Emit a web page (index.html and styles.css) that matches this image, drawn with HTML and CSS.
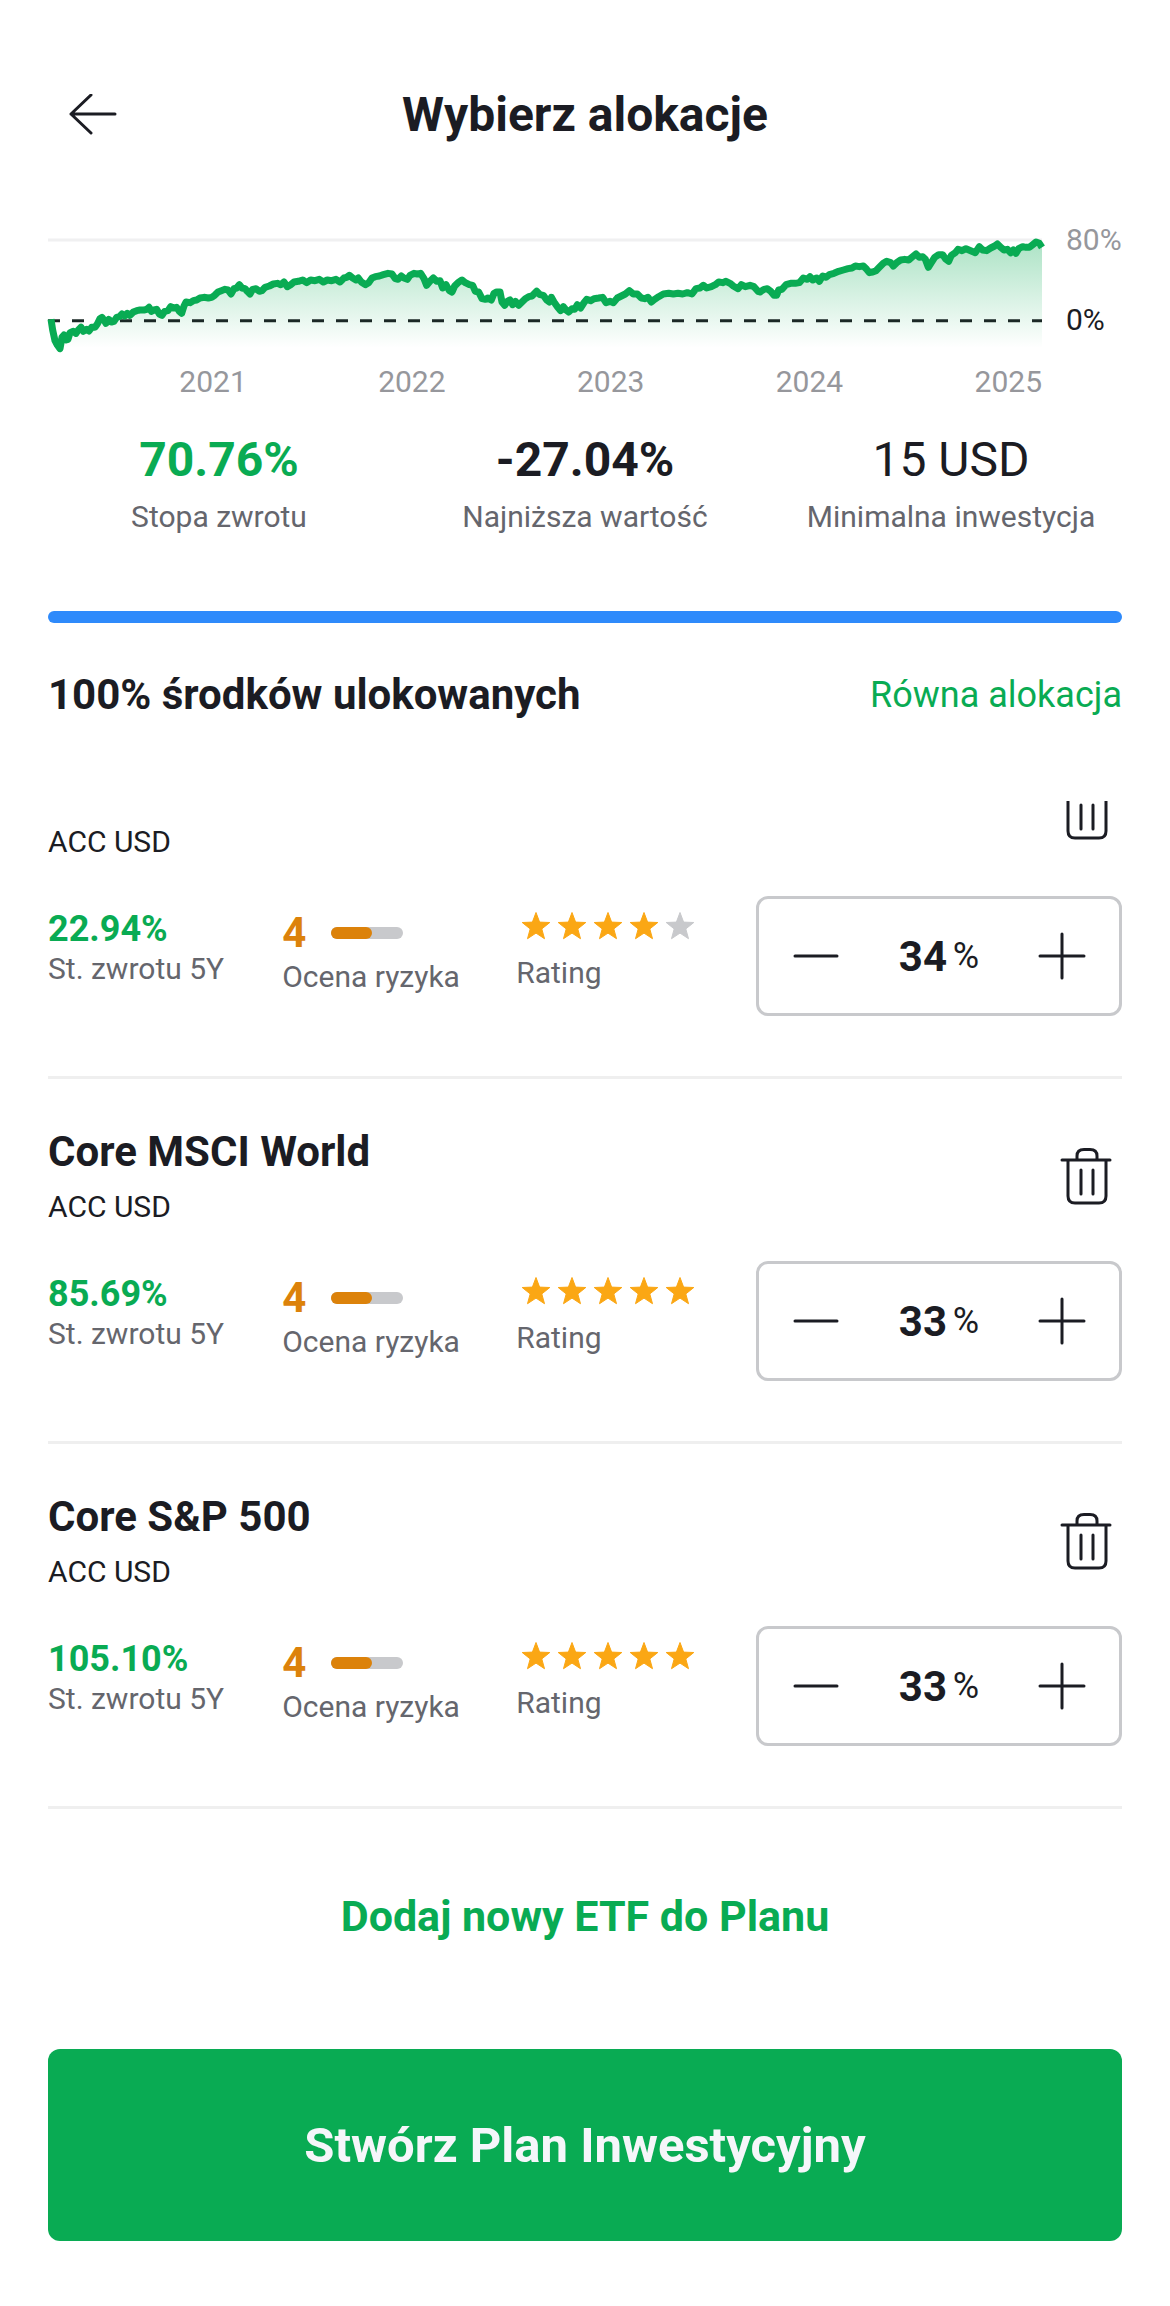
FILE: index.html
```
<!DOCTYPE html>
<html lang="pl">
<head>
  <meta charset="UTF-8">
  <meta name="viewport" content="width=device-width, initial-scale=1.0">
  <title>Wybierz alokacje</title>
  <link rel="stylesheet" href="styles.css">
</head>
<body>
  <!-- shared icons -->
  <svg class="sprite" aria-hidden="true">
    <symbol id="trash" viewBox="0 0 60 60">
      <path d="M6 12H54M12 12V48Q12 55 19 55H43Q50 55 50 48V12M21 12V8Q21 1.500 28 1.500H34Q41 1.500 41 8V12M25 22V46M37 22V46"/>
    </symbol>
    <symbol id="minus" viewBox="0 0 48 48"><path d="M3 24H45"/></symbol>
    <symbol id="plus" viewBox="0 0 48 48"><path d="M2 24H46M24 2V46"/></symbol>
    <symbol id="star" viewBox="0 0 36 36">
      <path d="M20 3.500L23.600 13.100L33.800 13.500L25.800 19.900L28.500 29.700L20 24.100L11.500 29.700L14.200 19.900L6.200 13.500L16.400 13.100Z"/>
    </symbol>
  </svg>

  <div class="screen">
    <header class="header">
      <button class="icon-button back" aria-label="Wstecz">
        <svg class="back-icon" viewBox="0 0 48 42"><path d="M46 20H2M22 1L2 20L22 39"/></svg>
      </button>
      <h1>Wybierz alokacje</h1>
    </header>

    <section class="chart">
      <svg class="plot" viewBox="0 0 2982 390" preserveAspectRatio="none">
        <defs>
          <linearGradient id="fade" gradientUnits="userSpaceOnUse" x1="0" y1="60" x2="0" y2="384">
            <stop offset="0" stop-color="#09ab53" stop-opacity="0.34"/>
            <stop offset="1" stop-color="#09ab53" stop-opacity="0"/>
          </linearGradient>
        </defs>
        <path class="grid-line" d="M0 60H2982"/>
        <path id="area" fill="url(#fade)"/>
        <path class="zero-line" d="M0 302H2982"/>
        <path id="line" class="line"/>
      </svg>
      <div class="y-axis">
        <span>80%</span>
        <span class="zero">0%</span>
      </div>
      <div class="x-axis">
        <span>2021</span>
        <span>2022</span>
        <span>2023</span>
        <span>2024</span>
        <span>2025</span>
      </div>
    </section>

    <section class="stats">
      <div class="stat">
        <strong class="green">70.76%</strong>
        <span>Stopa zwrotu</span>
      </div>
      <div class="stat">
        <strong>-27.04%</strong>
        <span>Najniższa wartość</span>
      </div>
      <div class="stat">
        <strong class="light">15 USD</strong>
        <span>Minimalna inwestycja</span>
      </div>
    </section>

    <div class="progress"><div class="progress-fill" style="width: 100%"></div></div>

    <div class="summary">
      <h2>100% środków ulokowanych</h2>
      <a href="#">Równa alokacja</a>
    </div>

    <!-- scrolled to the last fund -->
    <main class="fund-list">
      <article class="fund">
        <div class="fund-header">
          <div>
            <h3>Core MSCI EM IMI</h3>
            <p>ACC USD</p>
          </div>
          <button class="icon-button" aria-label="Usuń"><svg class="trash-icon"><use href="#trash"/></svg></button>
        </div>
        <div class="fund-body">
          <div class="metric">
            <div class="return">22.94%</div>
            <span>St. zwrotu 5Y</span>
          </div>
          <div class="metric">
            <div class="risk">4<div class="risk-bar"><div class="risk-fill" style="width: 57%"></div></div></div>
            <span>Ocena ryzyka</span>
          </div>
          <div class="metric">
            <div class="stars">
              <svg><use href="#star"/></svg><svg><use href="#star"/></svg><svg><use href="#star"/></svg><svg><use href="#star"/></svg><svg class="empty"><use href="#star"/></svg>
            </div>
            <span>Rating</span>
          </div>
          <div class="stepper">
            <button class="icon-button" aria-label="Mniej"><svg class="step-icon"><use href="#minus"/></svg></button>
            <label class="amount"><input type="text" inputmode="numeric" value="34">%</label>
            <button class="icon-button" aria-label="Więcej"><svg class="step-icon"><use href="#plus"/></svg></button>
          </div>
        </div>
      </article>

      <article class="fund">
        <div class="fund-header">
          <div>
            <h3>Core MSCI World</h3>
            <p>ACC USD</p>
          </div>
          <button class="icon-button" aria-label="Usuń"><svg class="trash-icon"><use href="#trash"/></svg></button>
        </div>
        <div class="fund-body">
          <div class="metric">
            <div class="return">85.69%</div>
            <span>St. zwrotu 5Y</span>
          </div>
          <div class="metric">
            <div class="risk">4<div class="risk-bar"><div class="risk-fill" style="width: 57%"></div></div></div>
            <span>Ocena ryzyka</span>
          </div>
          <div class="metric">
            <div class="stars">
              <svg><use href="#star"/></svg><svg><use href="#star"/></svg><svg><use href="#star"/></svg><svg><use href="#star"/></svg><svg><use href="#star"/></svg>
            </div>
            <span>Rating</span>
          </div>
          <div class="stepper">
            <button class="icon-button" aria-label="Mniej"><svg class="step-icon"><use href="#minus"/></svg></button>
            <label class="amount"><input type="text" inputmode="numeric" value="33">%</label>
            <button class="icon-button" aria-label="Więcej"><svg class="step-icon"><use href="#plus"/></svg></button>
          </div>
        </div>
      </article>

      <article class="fund">
        <div class="fund-header">
          <div>
            <h3>Core S&amp;P 500</h3>
            <p>ACC USD</p>
          </div>
          <button class="icon-button" aria-label="Usuń"><svg class="trash-icon"><use href="#trash"/></svg></button>
        </div>
        <div class="fund-body">
          <div class="metric">
            <div class="return">105.10%</div>
            <span>St. zwrotu 5Y</span>
          </div>
          <div class="metric">
            <div class="risk">4<div class="risk-bar"><div class="risk-fill" style="width: 57%"></div></div></div>
            <span>Ocena ryzyka</span>
          </div>
          <div class="metric">
            <div class="stars">
              <svg><use href="#star"/></svg><svg><use href="#star"/></svg><svg><use href="#star"/></svg><svg><use href="#star"/></svg><svg><use href="#star"/></svg>
            </div>
            <span>Rating</span>
          </div>
          <div class="stepper">
            <button class="icon-button" aria-label="Mniej"><svg class="step-icon"><use href="#minus"/></svg></button>
            <label class="amount"><input type="text" inputmode="numeric" value="33">%</label>
            <button class="icon-button" aria-label="Więcej"><svg class="step-icon"><use href="#plus"/></svg></button>
          </div>
        </div>
      </article>
    </main>

    <footer class="footer">
      <button class="add-button">Dodaj nowy ETF do Planu</button>
      <button class="create-button">Stwórz Plan Inwestycyjny</button>
    </footer>
  </div>

  <script>
    // x,y pairs of the portfolio history in plot units
    const points = `9,298 14,330 21,362 28,375 36,386 42,352 48,345 54,360 60,358 66,338 76,334 84,340 91,330 99,322
      106,334 116,328 123,333 131,322 141,322 148,312 156,296 162,292 168,300 174,310 182,298 190,306 198,304 206,292
      214,290 222,282 230,288 238,280 246,286 256,276 266,272 276,270 288,270 296,268 303,262 310,274 318,270 326,268
      334,282 342,286 350,274 360,272 368,260 376,264 386,262 394,274 401,280 408,258 414,246 426,248 436,242 446,240
      456,234 468,232 481,234 491,232 500,226 510,216 520,212 531,208 540,210 549,222 558,206 566,204 574,194 582,204
      591,206 598,214 606,222 614,208 624,206 634,214 642,212 651,202 664,198 676,192 688,190 698,194 708,186 718,200
      728,194 738,186 751,184 764,180 776,188 788,180 801,182 814,178 826,186 838,180 851,182 864,178 876,186 888,174
      896,172 904,166 914,174 924,180 931,174 940,186 952,194 962,188 972,174 982,170 994,168 1006,164 1020,160
      1032,162 1042,176 1050,178 1060,168 1068,174 1078,178 1086,166 1098,160 1108,162 1118,160 1128,176 1136,196
      1146,184 1156,174 1166,184 1176,182 1184,204 1194,194 1204,212 1212,216 1220,198 1230,188 1242,180 1252,188
      1264,194 1274,196 1282,214 1292,216 1302,236 1312,238 1320,234 1330,240 1338,220 1346,216 1356,216 1362,246
      1370,256 1378,244 1386,240 1394,254 1402,244 1412,256 1422,246 1432,236 1442,230 1452,228 1466,214 1476,224
      1486,226 1496,240 1504,246 1510,232 1518,246 1528,260 1538,272 1546,260 1554,270 1562,276 1572,266 1580,268
      1588,254 1598,264 1608,248 1616,238 1628,242 1638,236 1652,234 1664,232 1674,248 1686,244 1696,248 1708,234
      1720,228 1732,222 1744,212 1756,222 1768,222 1780,234 1790,236 1800,232 1810,246 1820,238 1832,230 1846,222
      1862,220 1876,222 1890,220 1904,222 1918,218 1932,222 1944,206 1956,204 1966,196 1976,204 1990,200 2002,194
      2012,186 2024,188 2034,184 2046,190 2056,198 2070,206 2080,194 2092,200 2106,196 2118,200 2130,214 2136,216
      2148,208 2158,206 2168,214 2178,226 2186,226 2192,210 2202,208 2214,194 2228,190 2242,190 2254,188 2266,174
      2278,178 2286,170 2294,180 2306,174 2314,184 2324,168 2334,172 2344,164 2358,160 2372,154 2386,150 2400,146
      2412,144 2422,138 2434,140 2446,138 2456,148 2464,158 2474,156 2484,152 2494,142 2506,130 2516,124 2528,128
      2536,138 2546,128 2558,120 2570,118 2582,120 2594,110 2604,102 2614,112 2624,110 2632,118 2641,142 2650,128
      2660,112 2672,104 2684,104 2692,116 2702,124 2710,106 2722,98 2730,88 2742,92 2754,86 2768,92 2782,98 2794,80
      2804,90 2816,92 2828,84 2840,78 2848,72 2858,82 2868,90 2878,88 2888,98 2896,90 2904,100 2912,86 2924,80
      2934,82 2944,82 2954,74 2964,66 2974,70 2982,82`.trim().split(/\s+/);

    const path = 'M' + points.join('L');
    document.getElementById('line').setAttribute('d', path);
    document.getElementById('area').setAttribute('d', path + 'V384H9Z');
  </script>
</body>
</html>
```
FILE: styles.css
```
* {
  box-sizing: border-box;
}

body {
  margin: 0;
  background-color: #fff;
  color: #1b1c23;
  font-family: Roboto, sans-serif;
  font-size: 30px;
  line-height: 40px;
}

h1, h2, h3, p {
  margin: 0;
}

button, input {
  padding: 0;
  border: none;
  background: none;
  color: inherit;
  font-family: inherit;
}

button {
  cursor: pointer;
}

svg {
  display: block;
}

.sprite {
  display: none;
}

.green {
  color: #09ab53;
}

.screen {
  display: flex;
  flex-direction: column;
  height: 100vh;
  padding: 85px 48px 65px;
}

.icon-button {
  display: flex;
  justify-content: center;
  align-items: center;
  width: 72px;
  height: 72px;
  fill: none;
  stroke: #1b1c23;
  stroke-width: 3;
  stroke-linecap: round;
  stroke-linejoin: round;
}

/* Header */
.header {
  display: grid;
  grid-template-columns: 90px 1fr 90px;
  align-items: center;
}

.header h1 {
  font-size: 48px;
  line-height: 60px;
  text-align: center;
}

.back {
  width: 90px;
  height: 60px;
}

.back-icon {
  width: 48px;
  height: 42px;
}

/* Chart */
.chart {
  display: grid;
  grid-template-columns: 1fr 56px;
  column-gap: 24px;
  row-gap: 12px;
  margin-top: 75px;
  color: #96979c;
}

.plot {
  width: 100%;
  height: 130px;
  overflow: visible;
}

.plot path {
  vector-effect: non-scaling-stroke;
}

.grid-line {
  stroke: #f0f0f1;
  stroke-width: 3;
}

.zero-line {
  stroke: #1b2826;
  stroke-width: 3;
  stroke-dasharray: 12;
}

.line {
  fill: none;
  stroke: #09ab53;
  stroke-width: 7;
  stroke-linejoin: round;
}

.y-axis {
  display: flex;
  flex-direction: column;
  gap: 40px;
}

.zero {
  color: #1b1c23;
}

.x-axis {
  display: grid;
  grid-template-columns: repeat(5, 1fr);
  text-align: right;
}

/* Stats */
.stats {
  display: grid;
  grid-template-columns: repeat(3, 1fr);
  gap: 24px;
  margin-top: 28px;
}

.stat {
  display: flex;
  flex-direction: column;
  gap: 7px;
  text-align: center;
}

.stat strong {
  font-size: 48px;
  line-height: 60px;
}

.stat .light {
  font-weight: 400;
}

.stat span {
  color: #65666d;
}

.progress {
  flex-shrink: 0;
  height: 12px;
  margin-top: 74px;
  border-radius: 6px;
}

.progress-fill {
  height: 100%;
  border-radius: 6px;
  background-color: #2e8afb;
}

.summary {
  display: flex;
  justify-content: space-between;
  align-items: center;
  margin: 48px 0 82px;
}

.summary h2 {
  font-size: 42px;
  line-height: 48px;
}

.summary a {
  color: #09ab53;
  font-size: 36px;
  text-decoration: none;
}

/* Funds */
.fund-list {
  flex: 1;
  display: flex;
  flex-direction: column;
  justify-content: flex-end;
  min-height: 0;
  overflow: hidden;
}

.fund {
  flex-shrink: 0;
  padding: 49px 0 60px;
  border-bottom: 3px solid #efefef;
}

.fund-header {
  display: flex;
  justify-content: space-between;
  align-items: center;
}

.fund h3 {
  margin-bottom: 11px;
  font-size: 42px;
  line-height: 48px;
}

.trash-icon {
  width: 60px;
  height: 60px;
}

.fund-body {
  display: grid;
  grid-template-columns: 21.8% 21.8% 1fr 366px;
  margin-top: 34px;
}

.metric {
  padding-top: 13px;
}

.metric span {
  color: #65666d;
}

.return {
  color: #09ab53;
  font-size: 36px;
  font-weight: 700;
}

.risk {
  display: flex;
  align-items: center;
  gap: 25px;
  color: #dc820a;
  font-size: 42px;
  font-weight: 700;
  line-height: 48px;
}

.risk-bar {
  width: 72px;
  height: 12px;
  border-radius: 6px;
  background-color: #c8c9cc;
}

.risk-fill {
  height: 100%;
  border-radius: 6px;
  background-color: #dc820a;
}

.stars {
  display: flex;
  margin-bottom: 8px;
}

.stars svg {
  width: 36px;
  height: 36px;
  fill: #fba714;
  stroke: #fba714;
  stroke-linejoin: round;
}

.stars .empty {
  fill: #c8c9cc;
  stroke: #c8c9cc;
}

.stepper {
  display: flex;
  justify-content: space-between;
  align-items: center;
  height: 120px;
  padding: 0 21px;
  border: 3px solid #c8c9cc;
  border-radius: 12px;
}

.step-icon {
  width: 48px;
  height: 48px;
}

.amount {
  display: flex;
  align-items: center;
  gap: 4px;
  font-size: 36px;
}

.amount input {
  width: 50px;
  font-size: 42px;
  font-weight: 700;
}

/* Footer */
.footer {
  display: flex;
  flex-direction: column;
  gap: 109px;
  padding-top: 83px;
}

.add-button {
  align-self: center;
  color: #09ab53;
  font-size: 43px;
  font-weight: 700;
  line-height: 48px;
}

.create-button {
  height: 192px;
  border-radius: 12px;
  background-color: #09ab53;
  color: #f5f6fa;
  font-size: 49px;
  font-weight: 700;
}
```
